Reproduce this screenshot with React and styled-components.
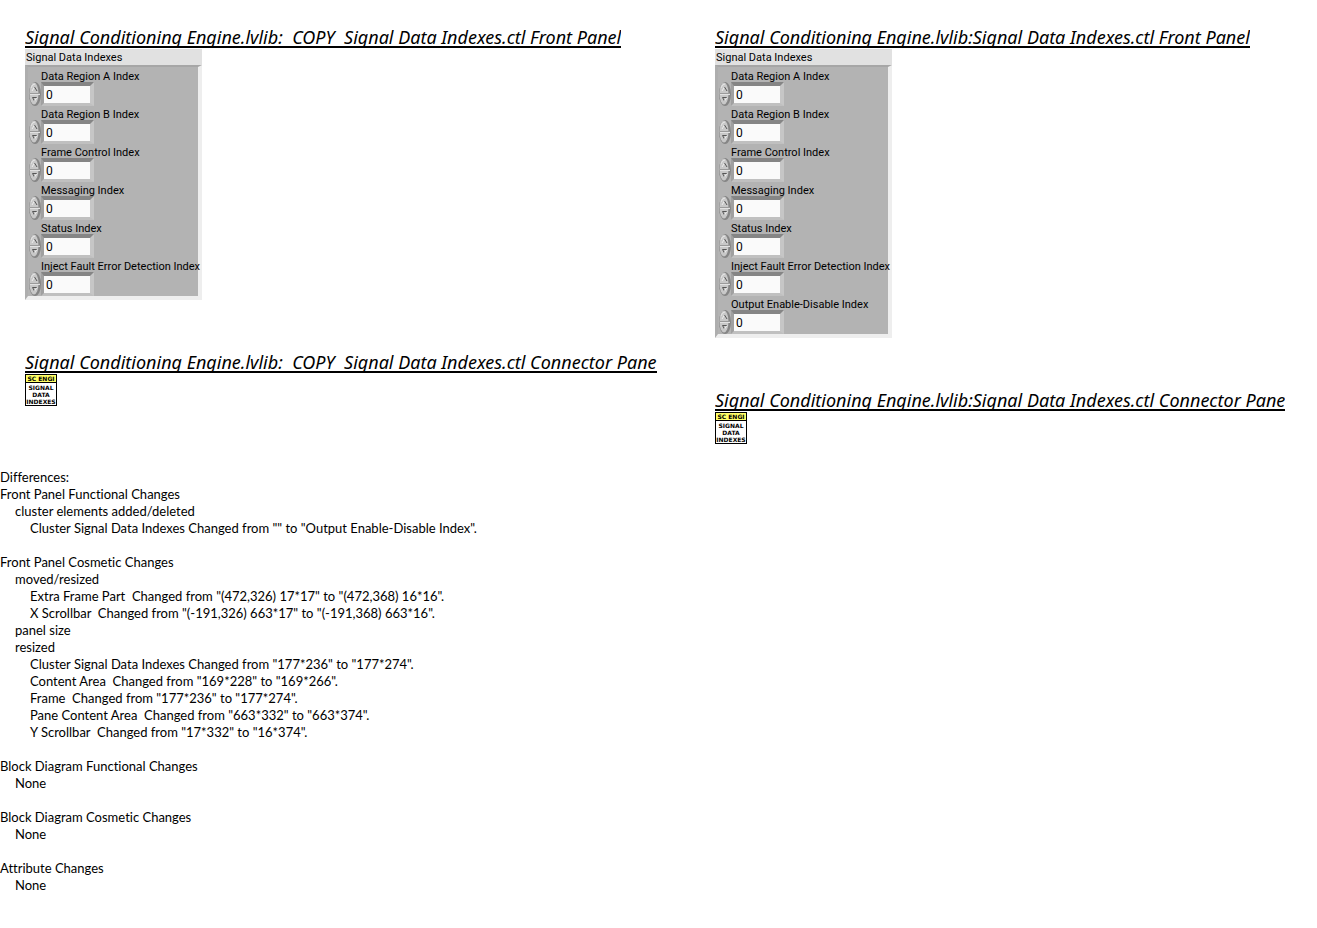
import React from "react";
import styled, { createGlobalStyle } from "styled-components";

const Global = createGlobalStyle`
  body {
    margin: 0;
    background: #fff;
    color: #000;
    font-family: Lato, Calibri, sans-serif;
    font-variant-ligatures: none;
  }
`;

const Comparison = styled.main`
  display: grid;
  grid-template-columns: 690fr 627fr;
  padding-top: 26px;
`;

const Version = styled.section`
  min-width: 0;
  padding: 0 0 0 25px;
`;

const Title = styled.h2`
  width: max-content;
  height: 20px;
  margin: 0 0 1px;
  overflow: hidden;
  border-bottom: 2px solid #000;
  font-family: "Noto Sans", Calibri, sans-serif;
  font-size: 18px;
  font-style: italic;
  font-weight: 400;
  line-height: 22px;
  white-space: pre;
`;

const Cluster = styled.fieldset`
  width: 177px;
  min-width: 0;
  box-sizing: border-box;
  margin: 0 0 51px;
  padding: 0;
  border: 0;
  font: 11px/16px Roboto, Arial, sans-serif;
`;

const Caption = styled.legend`
  width: 100%;
  height: 16px;
  box-sizing: border-box;
  padding: 0 1px;
  background: #e1e1e1;
  line-height: 18px;
`;

const ClusterBody = styled.div`
  padding: 1px 0 0 1px;
  background: #b3b3b3;
  border: solid;
  border-width: 2px 4px 4px 3px;
  border-color: #a6a6a6 #eee #eee #aeaeae;
`;

const Field = styled.div`
  display: grid;
  grid-template-columns: 12px 1fr;
  height: 38px;
`;

const FieldLabel = styled.label`
  grid-column: 2;
  height: 14px;
  line-height: 18px;
  white-space: nowrap;
`;

const Stepper = styled.svg`
  display: block;
  width: 12px;
  height: 24px;
`;

const NumberInput = styled.input`
  width: 53px;
  height: 24px;
  box-sizing: border-box;
  padding: 1px 2px 0;
  border: solid;
  border-width: 4px 4px 3px 3px;
  border-color: #858585 #c6c6c6 #c0c0c0 #a0a0a0;
  border-radius: 0;
  background: #fafafa;
  color: #000;
  font: 12px Roboto, Arial, sans-serif;
`;

const Connector = styled.svg`
  display: block;
  width: 32px;
  height: 32px;
  font: 700 6px "DejaVu Sans", Verdana, sans-serif;
`;

const Report = styled.section`
  padding: 25px 0 34px;
  font-size: 13px;
  line-height: 17px;
`;

const Line = styled.div`
  min-height: 17px;
  padding-left: ${(p) => p.$level * 15}px;
  white-space: pre-wrap;
`;

const baseFields = [
  "Data Region A Index",
  "Data Region B Index",
  "Frame Control Index",
  "Messaging Index",
  "Status Index",
  "Inject Fault Error Detection Index",
];

const versions = [
  { id: "copy", name: "Signal Conditioning Engine.lvlib:  COPY  Signal Data Indexes.ctl", fields: baseFields },
  {
    id: "current",
    name: "Signal Conditioning Engine.lvlib:Signal Data Indexes.ctl",
    fields: [...baseFields, "Output Enable-Disable Index"],
  },
];

const report = [
  [0, "Differences:"],
  [0, "Front Panel Functional Changes"],
  [1, "cluster elements added/deleted"],
  [2, 'Cluster Signal Data Indexes Changed from "" to "Output Enable-Disable Index".'],
  [0, ""],
  [0, "Front Panel Cosmetic Changes"],
  [1, "moved/resized"],
  [2, 'Extra Frame Part  Changed from "(472,326) 17*17" to "(472,368) 16*16".'],
  [2, 'X Scrollbar  Changed from "(-191,326) 663*17" to "(-191,368) 663*16".'],
  [1, "panel size"],
  [1, "resized"],
  [2, 'Cluster Signal Data Indexes Changed from "177*236" to "177*274".'],
  [2, 'Content Area  Changed from "169*228" to "169*266".'],
  [2, 'Frame  Changed from "177*236" to "177*274".'],
  [2, 'Pane Content Area  Changed from "663*332" to "663*374".'],
  [2, 'Y Scrollbar  Changed from "17*332" to "16*374".'],
  [0, ""],
  [0, "Block Diagram Functional Changes"],
  [1, "None"],
  [0, ""],
  [0, "Block Diagram Cosmetic Changes"],
  [1, "None"],
  [0, ""],
  [0, "Attribute Changes"],
  [1, "None"],
];

function StepperArrows() {
  return (
    <Stepper viewBox="0 0 12 24" aria-hidden="true">
      <ellipse cx="6" cy="12" rx="6" ry="12" fill="#858585" />
      <ellipse cx="5" cy="11.500" rx="4.500" ry="11" fill="#c8c8c8" />
      <path d="M2 6Q3 2 6 2" fill="none" stroke="#e6e6e6" />
      <path d="M1 11.500h10" stroke="#9a9a9a" />
      <path d="M1 12.500h10" stroke="#e2e2e2" />
      <path d="M3 9 5.500 5" fill="none" stroke="#eee" />
      <path d="M5.500 5 8 9" fill="none" stroke="#555" />
      <path d="M8 15.500H3.500L5.500 19" fill="none" stroke="#555" />
      <path d="M8 15.500 5.500 19" stroke="#eee" />
    </Stepper>
  );
}

function ConnectorPane() {
  return (
    <Connector viewBox="0 0 32 32" role="img" aria-label="Connector pane">
      <rect x="0.5" y="0.5" width="31" height="31" fill="#fff" stroke="#000" />
      <rect x="1" y="1" width="30" height="7" fill="#ffff66" />
      <path d="M0 8.500h32" stroke="#000" />
      <g textAnchor="middle">
        <text x="16" y="7">SC ENGI</text>
        <text x="16" y="16">SIGNAL</text>
        <text x="16" y="23">DATA</text>
        <text x="16" y="30">INDEXES</text>
      </g>
    </Connector>
  );
}

export default function App() {
  return (
    <>
      <Global />
      <Comparison>
        {versions.map(({ id, name, fields }) => (
          <Version key={id}>
            <Title>{name} Front Panel</Title>
            <Cluster>
              <Caption>Signal Data Indexes</Caption>
              <ClusterBody>
                {fields.map((label, i) => (
                  <Field key={label}>
                    <FieldLabel htmlFor={`${id}-${i}`}>{label}</FieldLabel>
                    <StepperArrows />
                    <NumberInput id={`${id}-${i}`} defaultValue="0" inputMode="numeric" />
                  </Field>
                ))}
              </ClusterBody>
            </Cluster>
            <Title>{name} Connector Pane</Title>
            <ConnectorPane />
          </Version>
        ))}
      </Comparison>
      <Report>
        {report.map(([level, text], i) => (
          <Line key={i} $level={level}>{text}</Line>
        ))}
      </Report>
    </>
  );
}
